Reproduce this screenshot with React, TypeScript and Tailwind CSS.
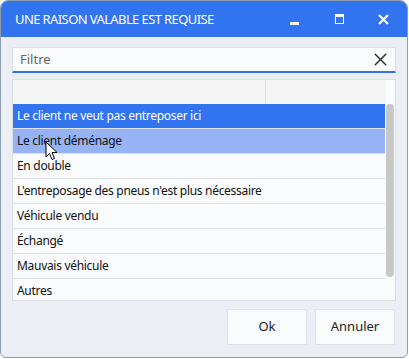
import { X } from 'lucide-react';

const reasons = [
  'Le client ne veut pas entreposer ici',
  'Le client déménage',
  'En double',
  "L'entreposage des pneus n'est plus nécessaire",
  'Véhicule vendu',
  'Échangé',
  'Mauvais véhicule',
  'Autres',
];

function TitleBar() {
  return (
    <div className="flex h-[36px] items-center bg-[#3273ef] pl-[14px] text-white">
      <span className="flex-1 pt-[1px] text-[13px] tracking-[-0.6px]">UNE RAISON VALABLE EST REQUISE</span>
      <div className="flex items-center">
        <div className="flex w-[45px] justify-center pt-[8px]">
          <div className="h-[3px] w-[9px] bg-white" />
        </div>
        <div className="flex w-[45px] justify-center">
          <div className="h-[10px] w-[9px] border border-t-[3px] border-white" />
        </div>
        <div className="flex w-[45px] justify-center pr-[2px]">
          <svg width="11" height="11" viewBox="0 0 11 11">
            <path d="M1 1L10 10M10 1L1 10" stroke="white" strokeWidth="2.2" />
          </svg>
        </div>
      </div>
    </div>
  );
}

export default function App() {
  return (
    <div className="relative h-[359px] w-[409px] bg-white" style={{ fontFamily: '"Noto Sans", "Open Sans", sans-serif' }}>
      <div className="flex h-[358px] w-[408px] flex-col overflow-hidden rounded-t-[8px] rounded-b-[6px] border border-[#8c9db0] bg-[#ebeef5]">
        <TitleBar />
        <div className="flex flex-1 flex-col px-[11px] pt-[10px]">
          <div className="flex h-[26px] items-center border border-b-2 border-[#dde1e8] border-b-[#3273ef] bg-[#f9fbfd] pl-[7px] pr-[4px]">
            <span className="flex-1 text-[13px] text-[#666]">Filtre</span>
            <X size={21} strokeWidth={1.7} className="text-[#333]" />
          </div>
          <div className="mt-[6px] flex h-[222px] flex-col overflow-hidden border border-[#dcdee2] bg-[#f9fbfd]">
            <div className="flex h-[24px] shrink-0">
              <div className="w-[253px] border-r border-[#dcdcdc] bg-[#f5f5f5]" />
              <div className="w-[120px] bg-[#f5f5f5]" />
              <div className="flex-1" />
            </div>
            <div className="flex flex-1 overflow-hidden">
              <div className="flex w-[374px] flex-col">
                {reasons.map((r, i) => (
                  <div
                    key={r}
                    className={
                      i === 0
                        ? 'flex h-[25px] shrink-0 items-center border-b border-[#dfe2e6] bg-[#3273ef] pl-[4px] text-[12px] tracking-[-0.3px] text-white'
                        : i === 1
                          ? 'flex h-[25px] shrink-0 items-center border-b border-[#dfe2e6] bg-[#96b4f5] pl-[4px] text-[12px] tracking-[-0.3px] text-[#111]'
                          : 'flex h-[25px] shrink-0 items-center border-b border-[#dfe2e6] bg-[#f9fbfd] pl-[4px] text-[12px] tracking-[-0.3px] text-[#111]'
                    }
                  >
                    {r}
                  </div>
                ))}
              </div>
              <div className="flex-1 pl-[1px] pr-[1px]">
                <div className="h-[173px] w-[8px] rounded-[4px] bg-[#c8c8c8]" />
              </div>
            </div>
          </div>
          <div className="mt-[8px] flex justify-end gap-[8px] pr-[1px]">
            <button className="h-[36px] w-[80px] border border-[#dde1e8] bg-[#f9fbfd] text-[13px] text-[#222]">Ok</button>
            <button className="h-[36px] w-[80px] border border-[#dde1e8] bg-[#f9fbfd] text-[13px] text-[#222]">Annuler</button>
          </div>
        </div>
      </div>
      <svg className="pointer-events-none absolute left-[45px] top-[141px]" width="14" height="20" viewBox="0 0 14 20">
        <path d="M1 1L1 16L4.5 12.5L7 18.5L9.5 17.5L7 11.5L12 11.5Z" fill="white" stroke="black" strokeWidth="1" />
      </svg>
    </div>
  );
}
